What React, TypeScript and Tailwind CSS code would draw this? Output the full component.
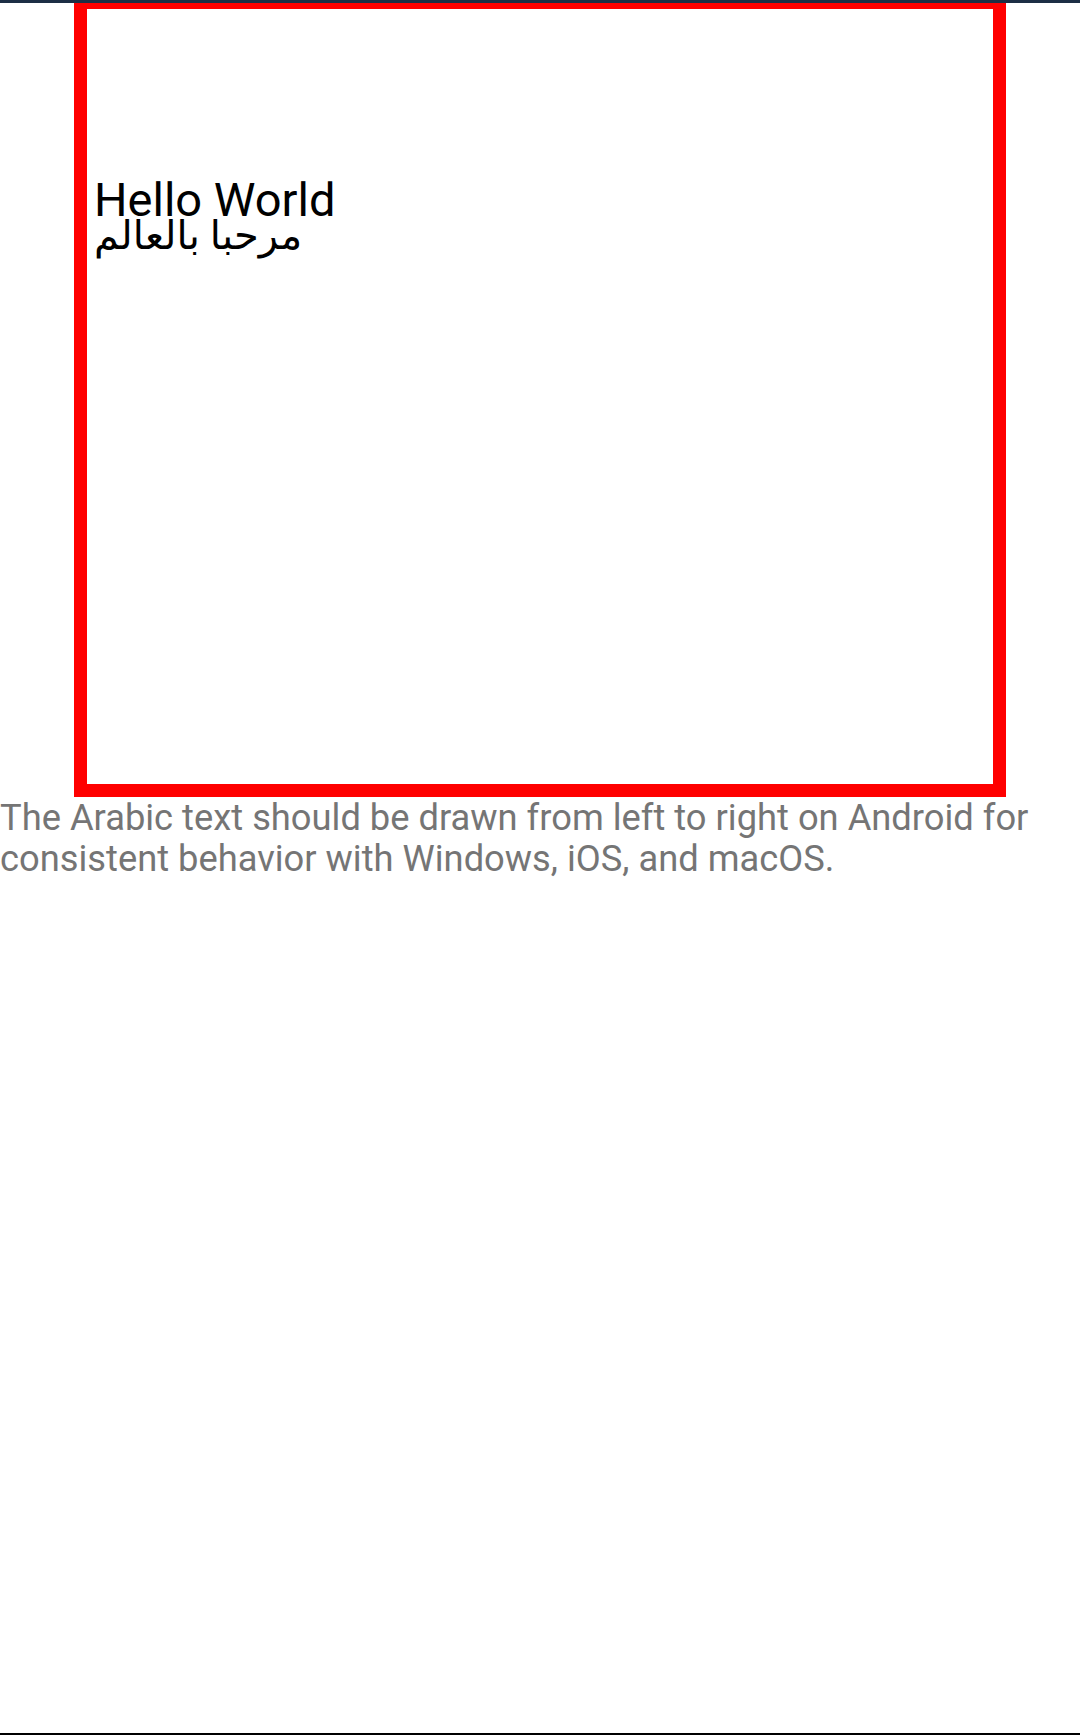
export default function App() {
  return (
    <div className="relative flex h-[1735px] w-[1080px] flex-col bg-white" style={{ fontFamily: 'Roboto, "DejaVu Sans", sans-serif' }}>
      {/* status bar edge */}
      <div className="h-[3px] w-full bg-[#1c2f45]" />

      {/* red box */}
      <div className="ml-[74px] h-[794px] w-[932px] border-x-[13px] border-t-[6px] border-b-[13px] border-[#ff0000] pl-[7px] pt-[174px]">
        <div className="text-[47px] leading-[33px] text-black">Hello World</div>
        <div className="text-[40px] leading-[40px] text-black">مرحبا بالعالم</div>
      </div>

      <p className="text-[36.3px] leading-[41px] text-[#757575]">
        The Arabic text should be drawn from left to right on Android for consistent behavior with Windows, iOS, and macOS.
      </p>

      <div className="mt-auto h-[2px] w-full bg-black" />
    </div>
  )
}
